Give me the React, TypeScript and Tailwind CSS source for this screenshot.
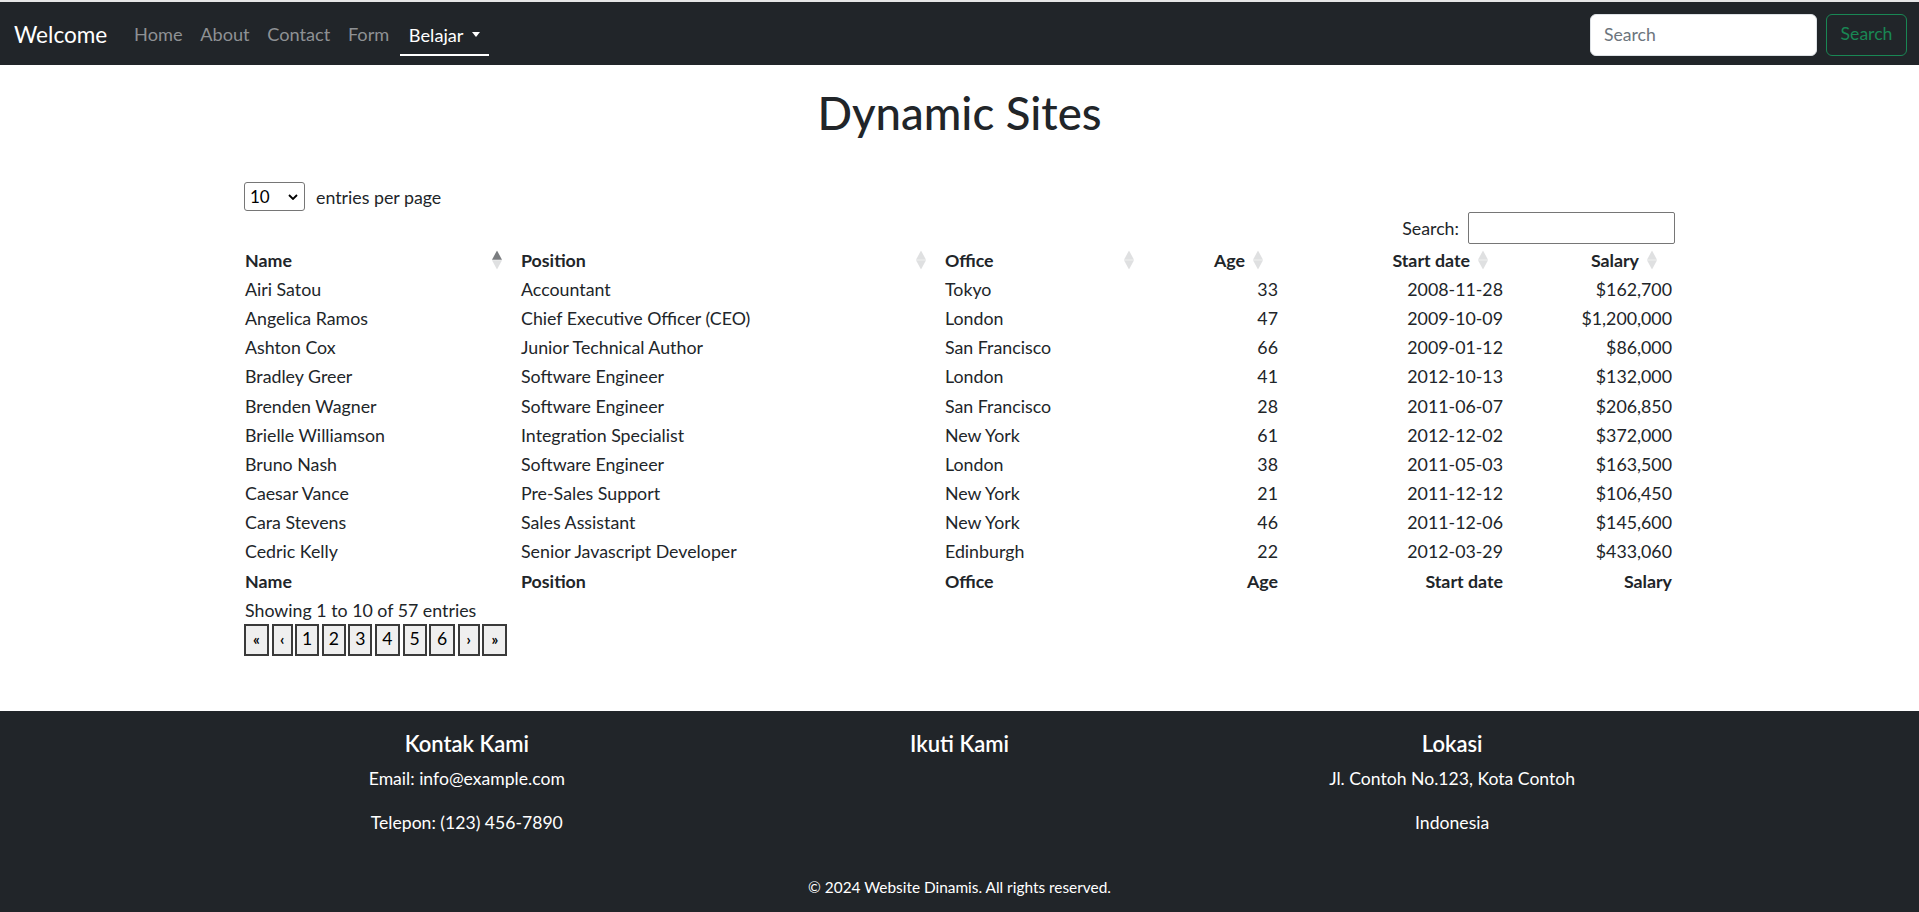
import React from "react";

const rows: [string, string, string, string, string, string][] = [
  ["Airi Satou", "Accountant", "Tokyo", "33", "2008-11-28", "$162,700"],
  ["Angelica Ramos", "Chief Executive Officer (CEO)", "London", "47", "2009-10-09", "$1,200,000"],
  ["Ashton Cox", "Junior Technical Author", "San Francisco", "66", "2009-01-12", "$86,000"],
  ["Bradley Greer", "Software Engineer", "London", "41", "2012-10-13", "$132,000"],
  ["Brenden Wagner", "Software Engineer", "San Francisco", "28", "2011-06-07", "$206,850"],
  ["Brielle Williamson", "Integration Specialist", "New York", "61", "2012-12-02", "$372,000"],
  ["Bruno Nash", "Software Engineer", "London", "38", "2011-05-03", "$163,500"],
  ["Caesar Vance", "Pre-Sales Support", "New York", "21", "2011-12-12", "$106,450"],
  ["Cara Stevens", "Sales Assistant", "New York", "46", "2011-12-06", "$145,600"],
  ["Cedric Kelly", "Senior Javascript Developer", "Edinburgh", "22", "2012-03-29", "$433,060"],
];

function SortIcon({ active }: { active?: boolean }) {
  return (
    <svg width="10" height="19" viewBox="0 0 10 19" className="absolute right-[18px] top-1/2 -translate-y-1/2">
      <polygon points="5,0 10,9.2 0,9.2" fill={active ? "#7b7d80" : "#dfe0e1"} />
      <polygon points="0,9.8 10,9.8 5,19" fill="#dfe0e1" />
    </svg>
  );
}

const pages: { label: string; cls: string }[] = [
  { label: "«", cls: "w-[25px] text-[15px] font-bold" },
  { label: "‹", cls: "w-[21px] text-[15px] font-bold" },
  { label: "1", cls: "w-[24px] text-[17.6px]" },
  { label: "2", cls: "w-[24px] text-[17.6px]" },
  { label: "3", cls: "w-[24px] text-[17.6px]" },
  { label: "4", cls: "w-[25px] text-[17.6px]" },
  { label: "5", cls: "w-[24px] text-[17.6px]" },
  { label: "6", cls: "w-[26px] text-[17.6px]" },
  { label: "›", cls: "w-[22px] text-[15px] font-bold" },
  { label: "»", cls: "w-[25px] text-[15px] font-bold" },
];

export default function App() {
  const headers = ["Name", "Position", "Office", "Age", "Start date", "Salary"];
  const numeric = [false, false, false, true, true, true];
  return (
    <div className="font-['Lato',sans-serif] text-[#212529] bg-white min-h-screen">
      <div className="h-[2px] bg-[#e6e6e6]" />
      <nav className="bg-[#212529] h-[63px] flex items-center pl-[14px] pr-[12px] pt-[2px]">
        <a className="text-white text-[22.6px] leading-[26px] mr-[18px]">Welcome</a>
        <div className="flex items-center text-[18.2px] leading-[26px]">
          <a className="px-[8.8px] pt-[8px] pb-[10px] text-[#8e9194]">Home</a>
          <a className="px-[8.8px] pt-[8px] pb-[10px] text-[#8e9194]">About</a>
          <a className="px-[8.8px] pt-[8px] pb-[10px] text-[#8e9194]">Contact</a>
          <a className="px-[8.8px] pt-[8px] pb-[10px] text-[#8e9194]">Form</a>
          <a className="ml-[2px] px-[8.8px] pt-[8px] pb-[6px] text-white border-b-2 border-white flex items-center">
            Belajar
            <span className="ml-[9px] w-0 h-0 border-l-[4.5px] border-r-[4.5px] border-t-[5px] border-l-transparent border-r-transparent border-t-white" />
          </a>
        </div>
        <div className="ml-auto flex items-center gap-[9px]">
          <input
            placeholder="Search"
            className="w-[227px] h-[42px] rounded-[6px] bg-white border border-[#dee2e6] px-[13px] text-[17.6px] text-[#212529] placeholder:text-[#6c757d] outline-none"
          />
          <button className="w-[81px] h-[42px] rounded-[6px] border border-[#198754] text-[#198754] text-[17.6px]">
            Search
          </button>
        </div>
      </nav>

      <main className="w-[1431px] mx-auto">
        <h1 className="text-center text-[45.5px] leading-[53px] font-medium mt-[21px]">Dynamic Sites</h1>

        <div className="flex items-center mt-[43px] h-[29px] text-[17.8px]">
          <div className="relative w-[61px] h-[29px]">
            <select className="appearance-none w-full h-full border border-[#767676] rounded-[3px] pl-[5px] text-[17px] bg-white text-black outline-none">
              <option>10</option>
              <option>25</option>
              <option>50</option>
              <option>100</option>
            </select>
            <svg width="10" height="6" viewBox="0 0 10 6" className="absolute right-[7px] top-[12px] pointer-events-none">
              <polyline points="1,1 5,5 9,1" fill="none" stroke="#000" strokeWidth="1.8" />
            </svg>
          </div>
          <span className="ml-[11px] leading-[26px]">entries per page</span>
        </div>

        <div className="flex justify-end items-center mt-[1px] h-[32px] text-[17.8px]">
          <label className="mr-[9px] leading-[26px]">Search:</label>
          <input className="w-[207px] h-[32px] border border-[#767676] rounded-[2px] outline-none" />
        </div>

        <table className="table-fixed border-collapse w-[1431px] mt-[1px] text-[17.8px] leading-[26px]">
          <colgroup>
            <col className="w-[276px]" />
            <col className="w-[424px]" />
            <col className="w-[208px]" />
            <col className="w-[129px]" />
            <col className="w-[225px]" />
            <col className="w-[169px]" />
          </colgroup>
          <thead>
            <tr className="h-[29.2px]">
              {headers.map((h, i) => (
                <th
                  key={h}
                  className={
                    "relative p-0 font-bold " +
                    (numeric[i] ? "text-right pr-[36px]" : "text-left pl-[1px]")
                  }
                >
                  {h}
                  <SortIcon active={i === 0} />
                </th>
              ))}
            </tr>
          </thead>
          <tbody>
            {rows.map((r) => (
              <tr key={r[0]} className="h-[29.2px]">
                {r.map((c, i) => (
                  <td
                    key={i}
                    className={"p-0 " + (numeric[i] ? "text-right pr-[3px]" : "text-left pl-[1px]")}
                  >
                    {c}
                  </td>
                ))}
              </tr>
            ))}
          </tbody>
          <tfoot>
            <tr className="h-[29.2px]">
              {headers.map((h, i) => (
                <th
                  key={h}
                  className={"p-0 font-bold " + (numeric[i] ? "text-right pr-[3px]" : "text-left pl-[1px]")}
                >
                  {h}
                </th>
              ))}
            </tr>
          </tfoot>
        </table>

        <div className="text-[17.8px] leading-[26.4px] pl-[1px] mt-[2px]">Showing 1 to 10 of 57 entries</div>
        <div className="flex gap-[2.6px] h-[32px]">
          {pages.map((p, i) => (
            <button
              key={i}
              className={
                "h-[32px] border-2 border-[#3a3a3a] bg-[#efefef] text-black flex items-center justify-center " + p.cls
              }
            >
              {p.label}
            </button>
          ))}
        </div>
      </main>

      <footer className="bg-[#212529] text-white mt-[55px] pt-[20px] pb-[20px]">
        <div className="w-[1478px] mx-auto grid grid-cols-3 text-center">
          <div>
            <h5 className="text-[22px] leading-[26.4px] font-semibold mb-[9px]">Kontak Kami</h5>
            <p className="text-[17.6px] leading-[26.4px] mb-[17.6px]">Email: info@example.com</p>
            <p className="text-[17.6px] leading-[26.4px] mb-[17.6px]">Telepon: (123) 456-7890</p>
          </div>
          <div>
            <h5 className="text-[22px] leading-[26.4px] font-semibold mb-[9px]">Ikuti Kami</h5>
          </div>
          <div>
            <h5 className="text-[22px] leading-[26.4px] font-semibold mb-[9px]">Lokasi</h5>
            <p className="text-[17.6px] leading-[26.4px] mb-[17.6px]">Jl. Contoh No.123, Kota Contoh</p>
            <p className="text-[17.6px] leading-[26.4px] mb-[17.6px]">Indonesia</p>
          </div>
        </div>
        <p className="text-center text-[15.4px] leading-[23px] mt-[22px]">© 2024 Website Dinamis. All rights reserved.</p>
      </footer>
    </div>
  );
}
